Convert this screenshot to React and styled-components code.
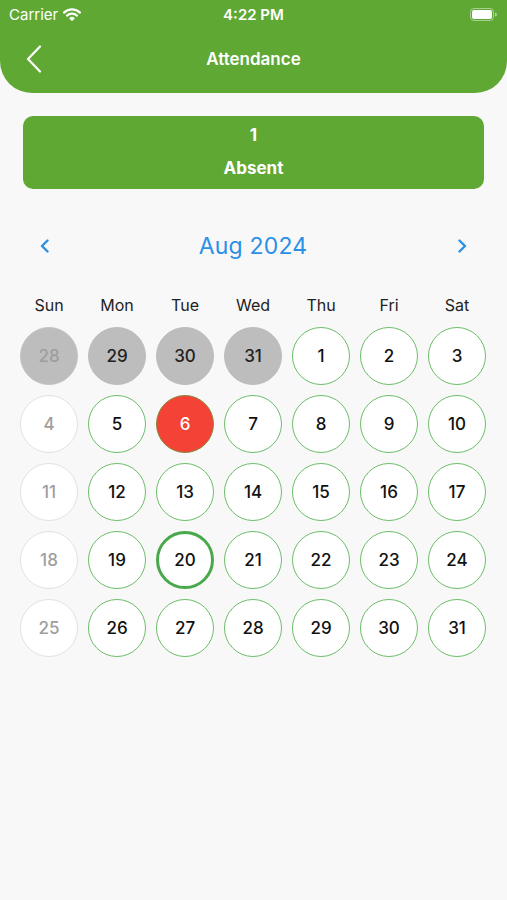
import React from "react";
import styled, { createGlobalStyle } from "styled-components";

const Global = createGlobalStyle`
  html, body { margin: 0; padding: 0; background: #f8f8f8; }
  body { font-family: "Inter", "Liberation Sans", sans-serif; -webkit-font-smoothing: antialiased; }
  * { box-sizing: border-box; }
`;

const Page = styled.div`
  width: 507px;
  min-height: 900px;
  background: #f8f8f8;
  display: flex;
  flex-direction: column;
`;

const Header = styled.header`
  background: #5fa834;
  border-bottom-left-radius: 32px;
  border-bottom-right-radius: 32px;
  padding-bottom: 3px;
  color: #fff;
`;

const StatusBar = styled.div`
  height: 28px;
  display: grid;
  grid-template-columns: 1fr auto 1fr;
  align-items: center;
  padding: 0 9px 0 9px;
  font-size: 15px;
`;

const Carrier = styled.div`
  display: flex;
  align-items: center;
  gap: 5px;
  font-weight: 400;
`;

const Time = styled.div`
  font-weight: 600;
`;

const Battery = styled.div`
  justify-self: end;
  display: flex;
  align-items: center;
  margin-right: 1px;
`;

const Nav = styled.div`
  height: 62px;
  display: flex;
  align-items: center;
  justify-content: center;
  position: relative;
`;

const BackButton = styled.div`
  position: absolute;
  left: 25px;
  top: 17px;
  display: flex;
`;

const Title = styled.h1`
  margin: 0;
  font-size: 17px;
  font-weight: 600;
`;

const SummaryCard = styled.div`
  margin: 23px 23px 0;
  height: 73px;
  border-radius: 10px;
  background: #5fa834;
  color: #fff;
  display: flex;
  flex-direction: column;
  align-items: center;
  padding-top: 9px;
  gap: 13px;
  font-size: 17px;
  font-weight: 700;
  line-height: 20px;
`;

const MonthRow = styled.div`
  margin-top: 37px;
  height: 40px;
  display: flex;
  align-items: center;
  justify-content: space-between;
  padding: 0 40px 0 39px;
`;

const MonthTitle = styled.div`
  font-size: 23px;
  color: #2b8fe6;
  font-weight: 400;
  letter-spacing: 0.2px;
`;

const Chevron = styled.div`
  width: 10px;
  display: flex;
  justify-content: center;
`;

const Grid = styled.div`
  margin: 0 16px 0 15px;
  display: grid;
  grid-template-columns: repeat(7, 68px);
`;

const WeekRow = styled(Grid)`
  margin-top: 27px;
  height: 24px;
  align-items: center;
`;

const WeekDay = styled.div`
  text-align: center;
  font-size: 16px;
  color: #222;
`;

const Days = styled(Grid)`
  margin-top: 5px;
  grid-auto-rows: 68px;
`;

const Cell = styled.div`
  display: flex;
  align-items: center;
  justify-content: center;
`;

const variants = {
  past: { bg: "#bdbdbd", border: "#bdbdbd", color: "#222", width: 1 },
  pastOut: { bg: "#bdbdbd", border: "#c4c4c4", color: "#9e9e9e", width: 1 },
  out: { bg: "#ffffff", border: "#e2e2e2", color: "#9e9e9e", width: 1 },
  normal: { bg: "#ffffff", border: "#6cbd6a", color: "#111", width: 1.5 },
  absent: { bg: "#f44336", border: "#8a8a3c", color: "#fff", width: 1 },
  today: { bg: "#ffffff", border: "#4aa84c", color: "#111", width: 3 },
};

const Day = styled.div`
  width: 58px;
  height: 58px;
  border-radius: 50%;
  display: flex;
  align-items: center;
  justify-content: center;
  font-size: 17px;
  font-weight: 500;
  background: ${(p) => variants[p.$v].bg};
  color: ${(p) => variants[p.$v].color};
  border: ${(p) => variants[p.$v].width}px solid ${(p) => variants[p.$v].border};
`;

const days = [
  [28, "pastOut"], [29, "past"], [30, "past"], [31, "past"], [1, "normal"], [2, "normal"], [3, "normal"],
  [4, "out"], [5, "normal"], [6, "absent"], [7, "normal"], [8, "normal"], [9, "normal"], [10, "normal"],
  [11, "out"], [12, "normal"], [13, "normal"], [14, "normal"], [15, "normal"], [16, "normal"], [17, "normal"],
  [18, "out"], [19, "normal"], [20, "today"], [21, "normal"], [22, "normal"], [23, "normal"], [24, "normal"],
  [25, "out"], [26, "normal"], [27, "normal"], [28, "normal"], [29, "normal"], [30, "normal"], [31, "normal"],
];

const weekdays = ["Sun", "Mon", "Tue", "Wed", "Thu", "Fri", "Sat"];

export default function App() {
  return (
    <Page>
      <Global />
      <Header>
        <StatusBar>
          <Carrier>
            Carrier
            <svg width="18" height="13" viewBox="0 0 18 13">
              <path d="M1 4.6a11.5 11.5 0 0 1 16 0" fill="none" stroke="#fff" strokeWidth="2.2" strokeLinecap="round" />
              <path d="M4 7.6a7.2 7.2 0 0 1 10 0" fill="none" stroke="#fff" strokeWidth="2.2" strokeLinecap="round" />
              <path d="M6.6 10.3a3.2 3.2 0 0 1 4.8 0L9 12.6z" fill="#fff" stroke="#fff" strokeWidth="1" strokeLinejoin="round" />
            </svg>
          </Carrier>
          <Time>4:22 PM</Time>
          <Battery>
            <svg width="27" height="13" viewBox="0 0 27 13">
              <rect x="0.5" y="0.5" width="23" height="12" rx="3.5" fill="none" stroke="rgba(255,255,255,0.45)" />
              <rect x="2" y="2" width="20" height="9" rx="2" fill="#fff" />
              <path d="M25 4.5v4a2 2 0 0 0 0-4z" fill="rgba(255,255,255,0.5)" />
            </svg>
          </Battery>
        </StatusBar>
        <Nav>
          <BackButton>
            <svg width="18" height="28" viewBox="0 0 18 28">
              <path d="M15 1.5L3 14l12 12.5" fill="none" stroke="#fff" strokeWidth="2.2" strokeLinecap="round" strokeLinejoin="round" />
            </svg>
          </BackButton>
          <Title>Attendance</Title>
        </Nav>
      </Header>

      <SummaryCard>
        <div>1</div>
        <div>Absent</div>
      </SummaryCard>

      <MonthRow>
        <Chevron>
          <svg width="9" height="14" viewBox="0 0 9 14">
            <path d="M7.5 1.5L2 7l5.5 5.5" fill="none" stroke="#2b8fe6" strokeWidth="2.4" strokeLinecap="round" strokeLinejoin="round" />
          </svg>
        </Chevron>
        <MonthTitle>Aug 2024</MonthTitle>
        <Chevron>
          <svg width="9" height="14" viewBox="0 0 9 14">
            <path d="M1.5 1.5L7 7l-5.5 5.5" fill="none" stroke="#2b8fe6" strokeWidth="2.4" strokeLinecap="round" strokeLinejoin="round" />
          </svg>
        </Chevron>
      </MonthRow>

      <WeekRow>
        {weekdays.map((w) => (
          <WeekDay key={w}>{w}</WeekDay>
        ))}
      </WeekRow>

      <Days>
        {days.map(([n, v], i) => (
          <Cell key={i}>
            <Day $v={v}>{n}</Day>
          </Cell>
        ))}
      </Days>
    </Page>
  );
}
